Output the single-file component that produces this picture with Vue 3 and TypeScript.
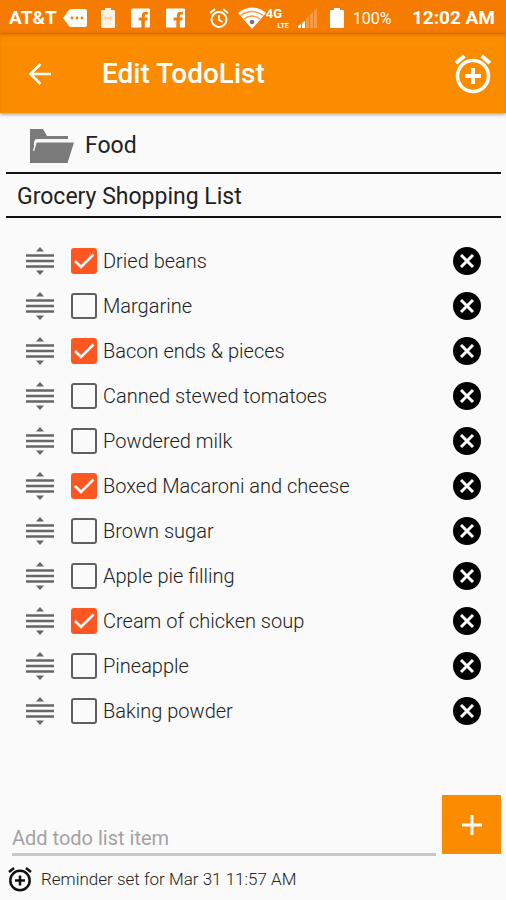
<script setup lang="ts">
import { ref } from 'vue'

interface TodoItem {
  id: number
  text: string
  done: boolean
}

const category = ref('Food')
const listTitle = ref('Grocery Shopping List')
const draft = ref('')
const reminder = ref('Mar 31 11:57 AM')

const items = ref<TodoItem[]>([
  { id: 1, text: 'Dried beans', done: true },
  { id: 2, text: 'Margarine', done: false },
  { id: 3, text: 'Bacon ends & pieces', done: true },
  { id: 4, text: 'Canned stewed tomatoes', done: false },
  { id: 5, text: 'Powdered milk', done: false },
  { id: 6, text: 'Boxed Macaroni and cheese', done: true },
  { id: 7, text: 'Brown sugar', done: false },
  { id: 8, text: 'Apple pie filling', done: false },
  { id: 9, text: 'Cream of chicken soup', done: true },
  { id: 10, text: 'Pineapple', done: false },
  { id: 11, text: 'Baking powder', done: false },
])

let nextId = 12

function addItem(): void {
  const text = draft.value.trim()
  if (!text) return
  items.value.push({ id: nextId++, text, done: false })
  draft.value = ''
}

function removeItem(id: number): void {
  items.value = items.value.filter((item) => item.id !== id)
}
</script>

<template>
  <div class="screen">
    <div class="status">
      <div class="status-group carrier">
        <span class="strong">AT&amp;T</span>
        <svg width="24" height="20" viewBox="0 0 24 20" aria-hidden="true">
          <path fill="#fff" d="M8 1h14q2 0 2 2v14q0 2-2 2H8q-1 0-2-1L0 10l6-8q1-1 2-1z" />
          <g fill="#f57c00"><circle cx="9" cy="10" r="1.400" /><circle cx="14" cy="10" r="1.400" /><circle cx="19" cy="10" r="1.400" /></g>
        </svg>
      </div>
      <div class="status-group notices">
        <svg width="14" height="20" viewBox="0 0 14 20" aria-hidden="true">
          <path fill="#fff3e6" d="M4 0h6v2h3q1 0 1 1v16q0 1-1 1H1q-1 0-1-1V3q0-1 1-1h3z" />
          <path fill="#fcd3ac" d="M2 10l3-3v2h4V7l3 3-3 3v-2H5v2z" />
        </svg>
        <svg v-for="n in 2" :key="n" width="19" height="20" viewBox="0 0 20 20" aria-hidden="true">
          <path fill="#fff" d="M1 0h18q1 0 1 1v18q0 1-1 1h-4.500v-7.500h2.700l.4-3h-3.100V7.700q0-1.500 1.600-1.500h1.600V3.400q-1-.1-2.300-.1-4 0-4 4v2.200H8v3h2.900V20H1q-1 0-1-1V1q0-1 1-1z" />
        </svg>
      </div>
      <div class="status-group system">
        <svg width="20" height="20" viewBox="0 0 20 20" fill="none" stroke="#fff" stroke-width="2" aria-hidden="true">
          <circle cx="10" cy="11.500" r="7.500" />
          <path d="M1 5l5-4M14 1l5 4" />
          <path stroke-width="1.700" d="M10 7v5l3.500 2" />
        </svg>
        <div class="network">
          <svg width="28" height="22" viewBox="0 0 28 22" aria-hidden="true">
            <path fill="#fff" d="M0 6Q14-5 28 6L14 22z" />
            <g fill="none" stroke="#f89b45" stroke-width="1.300"><path d="M2.500 8.500q11.500-8 23 0M6 12q8-6 16 0" /></g>
            <circle cx="14" cy="15" r="2.300" fill="#777" />
          </svg>
          <span class="cell"><b>4G</b><small>LTE</small></span>
        </div>
        <svg class="signal" width="20" height="20" viewBox="0 0 20 20" aria-hidden="true">
          <path fill="#fff" d="M0 18l3-2v4H0zM4 15l3-2v7H4z" />
          <path fill="#f99a45" d="M8 11l3-3v12H8zM12 7l3-3v16h-3zM16 3l3-3v20h-3z" />
        </svg>
        <svg width="14" height="20" viewBox="0 0 14 20" aria-hidden="true">
          <path fill="#fff" d="M4 0h6v2h3q1 0 1 1v16q0 1-1 1H1q-1 0-1-1V3q0-1 1-1h3z" />
        </svg>
        <span class="percent">100%</span>
      </div>
      <span class="strong">12:02 AM</span>
    </div>

    <header class="appbar">
      <button class="plain" type="button" aria-label="Back">
        <svg width="24" height="24" viewBox="0 0 24 24" fill="none" stroke="#fff" stroke-width="2.500" aria-hidden="true">
          <path d="M23 12H3M12.500 2L2.500 12l10 10" />
        </svg>
      </button>
      <h1>Edit TodoList</h1>
      <button class="plain" type="button" aria-label="Set reminder">
        <svg width="38" height="40" viewBox="0 0 38 40" fill="none" stroke="#fff" stroke-width="3.500" aria-hidden="true">
          <circle cx="19" cy="22" r="15.500" />
          <path stroke-width="4" d="M19 14v16M11 22h16" />
          <path stroke-width="4" d="M2 9l8.500-7M27.500 2L36 9" />
        </svg>
      </button>
    </header>

    <main>
      <div class="category">
        <svg width="46" height="36" viewBox="0 0 46 36" aria-hidden="true">
          <path fill="#7b7b7b" d="M1 1h13l4 7h21v3H8q-2 0-2.500 2L2 26h1l4-11.500h38L38.500 35H1z" />
          <path fill="#7b7b7b" d="M1 1h4v33H1z" />
          <path fill="none" stroke="#f2f2f2" stroke-width="1.400" d="M4.500 23L7 14.500q.5-2 2.500-2H45" />
        </svg>
        <span>{{ category }}</span>
      </div>
      <input v-model="listTitle" class="list-title" type="text" aria-label="List title" />

      <ul class="items">
        <li v-for="item in items" :key="item.id">
          <svg class="grip" width="30" height="28" viewBox="0 0 30 28" aria-hidden="true">
            <path fill="#666" d="M11 4.500L15 0l4 4.500zM11 23.500h8L15 28z" />
            <path stroke="#666" stroke-width="2.600" d="M1 8.500h28M1 14h28M1 19.500h28" />
          </svg>
          <label>
            <input v-model="item.done" type="checkbox" />
            <svg class="tick" width="26" height="26" viewBox="0 0 26 26" aria-hidden="true">
              <path fill="none" stroke="#fff" stroke-width="2.600" d="M4 13l6 6L22.500 6.500" />
            </svg>
            <span>{{ item.text }}</span>
          </label>
          <button class="plain" type="button" :aria-label="`Remove ${item.text}`" @click="removeItem(item.id)">
            <svg width="28" height="28" viewBox="0 0 28 28" aria-hidden="true">
              <circle cx="14" cy="14" r="14" />
              <path stroke="#fff" stroke-width="3" d="M8 8l12 12M20 8L8 20" />
            </svg>
          </button>
        </li>
      </ul>

      <form class="add" @submit.prevent="addItem">
        <input v-model="draft" type="text" placeholder="Add todo list item" aria-label="Add todo list item" />
        <button type="submit" aria-label="Add item">
          <svg width="22" height="22" viewBox="0 0 22 22" aria-hidden="true">
            <path stroke="#fff" stroke-width="3" d="M11 1v20M1 11h20" />
          </svg>
        </button>
      </form>

      <div class="reminder">
        <svg width="24" height="26" viewBox="0 0 24 26" fill="none" stroke="#111" stroke-width="2.500" aria-hidden="true">
          <circle cx="12" cy="14.500" r="9.700" />
          <path d="M12 9.500v10M7 14.500h10M1 6l5-4M18 2l5 4" />
        </svg>
        <span>Reminder set for {{ reminder }}</span>
      </div>
    </main>
  </div>
</template>

<style>
body {
  background: #fafafa;
}
</style>

<style scoped>
.screen {
  display: flex;
  flex-direction: column;
  min-height: 100vh;
  font-family: Roboto, "Liberation Sans", sans-serif;
  color: #212121;
}

svg {
  display: block;
  flex: none;
}

input,
button {
  font: inherit;
  color: inherit;
  margin: 0;
  border: 0;
  border-radius: 0;
  outline: 0;
}

button {
  cursor: pointer;
}

.plain {
  padding: 0;
  background: none;
}

.status {
  display: flex;
  align-items: center;
  height: 34px;
  padding: 2px 11px 0 9px;
  box-sizing: border-box;
  background: #f57c00;
  color: #fff;
  white-space: nowrap;
}

.status-group {
  display: flex;
  align-items: center;
}

.carrier {
  gap: 6px;
}

.notices {
  gap: 16px;
  margin-left: 14px;
}

.system {
  gap: 9px;
  margin: 0 auto 0 24px;
}

.network {
  display: flex;
  align-items: center;
}

.cell {
  display: flex;
  flex-direction: column;
  align-items: flex-end;
  width: 23px;
}

.cell b {
  align-self: flex-start;
  font-size: 13px;
  line-height: 16px;
}

.cell small {
  font-size: 7px;
  font-weight: 700;
  line-height: 9px;
}

.strong {
  font-size: 19px;
  font-weight: 700;
  line-height: 32px;
}

.signal {
  margin-right: 3px;
}

.percent {
  font-size: 16px;
}

.appbar {
  display: flex;
  align-items: center;
  height: 79px;
  padding: 0 14px 0 28px;
  background: #fb8c00;
  color: #fff;
  box-shadow: inset 0 2px 2px rgba(190, 90, 0, 0.3), 0 1px 4px rgba(0, 0, 0, 0.45);
}

h1 {
  flex: 1;
  margin: 0 0 0 50px;
  font-size: 28px;
  font-weight: 500;
  line-height: 32px;
}

main {
  display: flex;
  flex: 1;
  flex-direction: column;
  padding: 0 5px 2px 6px;
}

.category {
  display: flex;
  align-items: center;
  gap: 10px;
  height: 61px;
  padding: 6px 23px 0;
  border-bottom: 2px solid #111;
  box-sizing: border-box;
  font-size: 23px;
}

.list-title {
  height: 44px;
  padding: 2px 11px 0;
  box-sizing: border-box;
  border-bottom: 2px solid #111;
  background: none;
  font-size: 23px;
}

.items {
  flex: 1;
  margin: 0;
  padding: 20px 20px 20px 19px;
  list-style: none;
}

.items li {
  display: flex;
  align-items: center;
  gap: 16px;
  height: 45px;
}

.items label {
  display: flex;
  flex: 1;
  align-items: center;
  gap: 6px;
  position: relative;
  font-size: 20px;
  font-weight: 300;
  line-height: 26px;
}

.items input {
  appearance: none;
  flex: none;
  width: 26px;
  height: 26px;
  border: 2px solid #606060;
  border-radius: 3px;
}

.items input:checked {
  border-color: #ff5722;
  background: #ff5722;
}

.tick {
  position: absolute;
  left: 0;
  visibility: hidden;
  pointer-events: none;
}

.items input:checked + .tick {
  visibility: visible;
}

.add {
  display: flex;
  align-items: flex-end;
  gap: 6px;
}

.add input {
  flex: 1;
  min-width: 0;
  height: 30px;
  margin: 0 0 -2px 6px;
  padding: 0;
  border-bottom: 3px solid #c8c8c8;
  background: none;
  font-size: 20px;
}

.add input::placeholder {
  color: #a3a3a3;
  opacity: 1;
}

.add button {
  display: grid;
  place-items: center;
  width: 59px;
  height: 59px;
  padding: 0;
  background: #fb8c00;
}

.reminder {
  display: flex;
  align-items: center;
  gap: 9px;
  height: 44px;
  padding: 6px 2px 0;
  box-sizing: border-box;
  font-size: 17px;
  font-weight: 300;
}
</style>
